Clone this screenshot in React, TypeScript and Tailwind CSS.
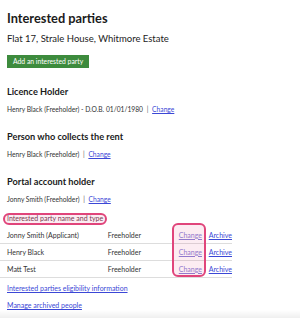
import React from "react";

const rows = [
    { name: "Jonny Smith (Applicant)", type: "Freeholder" },
    { name: "Henry Black", type: "Freeholder" },
    { name: "Matt Test", type: "Freeholder" },
];

function Section({ title, first, children }: { title: string; first?: boolean; children: React.ReactNode }) {
    return (
        <div className={first ? "mt-[16px]" : "mt-[17px]"}>
            <h2 className="text-[9.2px] font-bold text-[#1b1b1b] leading-[12px]">{title}</h2>
            <p className="mt-[6px] text-[6.7px] leading-[10px] text-[#333]">{children}</p>
        </div>
    );
}

export default function App() {
    return (
        <div
            className="relative w-[300px] h-[318px] bg-white overflow-hidden"
            style={{ fontFamily: "Lato, 'Noto Sans', sans-serif" }}
        >
            <div className="px-[7px] pt-[8px]">
                <h1 className="text-[12.8px] font-bold leading-[20px] text-[#1b1b1b]">Interested parties</h1>
                <p className="mt-[5px] text-[9.5px] leading-[12px] text-[#222]">
                    Flat 17, Strale House, Whitmore Estate
                </p>
                <button className="mt-[10px] h-[13px] px-[6px] bg-[#3d8b3d] text-white text-[6.8px] leading-[13px]">
                    Add an interested party
                </button>

                <Section title="Licence Holder" first>
                    Henry Black (Freeholder) - D.O.B. 01/01/1980 <span className="mx-[2px] text-[#555]">|</span>{" "}
                    <a className="text-[#3b47d6] underline">Change</a>
                </Section>
                <Section title="Person who collects the rent">
                    Henry Black (Freeholder) <span className="mx-[2px] text-[#555]">|</span>{" "}
                    <a className="text-[#3b47d6] underline">Change</a>
                </Section>
                <Section title="Portal account holder">
                    Jonny Smith (Freeholder) <span className="mx-[2px] text-[#555]">|</span>{" "}
                    <a className="text-[#3b47d6] underline">Change</a>
                </Section>
            </div>

            <div className="mt-[6px] w-[232px] text-[7px] text-[#333]">
                <div className="relative h-[17px] flex items-center px-[7px]">
                    <span className="text-[#6b3a4a]">Interested party name and type</span>
                    <div className="absolute left-[3px] top-[3px] w-[104px] h-[12px] rounded-full border-2 border-[#e0457b] bg-[#e0457b]/10" />
                </div>
                {rows.map((r) => (
                    <div key={r.name} className="flex items-center h-[17px] border-b border-[#ddd]">
                        <span className="pl-[7px] w-[108px]">{r.name}</span>
                        <span className="w-[71px]">{r.type}</span>
                        <a className="w-[30px] text-[#8a7fd6] underline">Change</a>
                        <a className="text-[#3b47d6] underline">Archive</a>
                    </div>
                ))}
            </div>
            <div className="absolute left-[172px] top-[223px] w-[34px] h-[54px] rounded-[6px] border-2 border-[#e0457b] bg-[#e0457b]/10" />

            <div className="px-[7px] mt-[5px] text-[7px] leading-[10px] flex flex-col gap-[7px]">
                <a className="text-[#3b47d6] underline">Interested parties eligibility information</a>
                <a className="text-[#3b47d6] underline">Manage archived people</a>
            </div>

            <div className="absolute bottom-0 left-0 w-full h-[8px] bg-gradient-to-b from-white to-[#efefef]" />
        </div>
    );
}
